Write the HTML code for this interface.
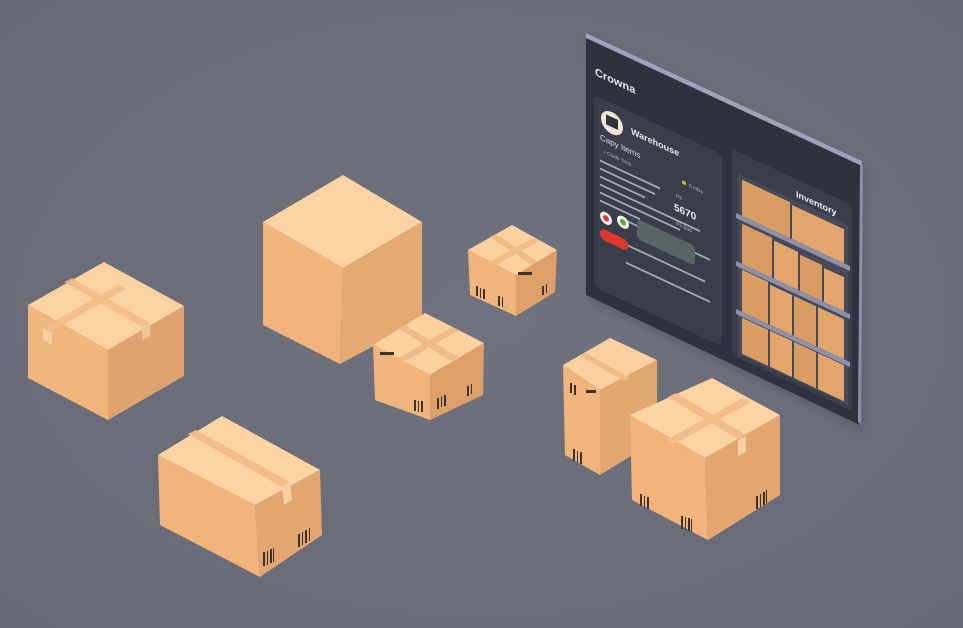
<!DOCTYPE html>
<html><head><meta charset="utf-8"><style>
html,body{margin:0;padding:0;background:#6b6e7a;width:963px;height:628px;overflow:hidden}
svg{display:block}
text{font-family:"Liberation Sans",sans-serif}
</style></head><body>
<svg width="963" height="628" viewBox="0 0 963 628" xmlns="http://www.w3.org/2000/svg">
<defs>
<radialGradient id="bg" cx="50%" cy="50%" r="70%"><stop offset="0" stop-color="#6f727d"/><stop offset="1" stop-color="#676a76"/></radialGradient>
<filter id="sh" x="-20%" y="-20%" width="140%" height="140%"><feGaussianBlur stdDeviation="4"/></filter>
</defs>
<rect width="963" height="628" fill="url(#bg)"/>

<!-- panel -->
<polygon points="590,40 864,168 862,430 590,302" fill="#50535f" opacity="0.5" filter="url(#sh)"/>
<polygon points="586,33 862,161 860,425 586,295" fill="#2e323d"/>
<polygon points="586,33 862,161 862,166 586,38" fill="#a39fbd"/>
<polygon points="860,163 863,166 861,425 858,422" fill="#8f8daa"/>
<g transform="translate(586,33) skewY(25)">
  <text x="9" y="38" font-size="11" fill="#e6e6ea" font-weight="bold">Crowna</text>
  <rect x="8" y="58" width="128" height="192" rx="6" fill="#3a3e4a"/>
  <circle cx="26" cy="78" r="11" fill="#f1e6d4"/>
  <rect x="20" y="72" width="12" height="10" fill="#2e323d"/>
  <text x="45" y="80" font-size="9" fill="#e8e8ec" font-weight="bold">Warehouse</text>
  <text x="14" y="100" font-size="8" fill="#e0e0e4">Capy Items</text>
  <text x="18" y="112" font-size="5" fill="#bcbcc4">• Clails Tims</text>
  <circle cx="98" cy="104" r="2" fill="#e6b030"/>
  <text x="103" y="106" font-size="5" fill="#bcbcc4">5 HDs</text>
  <text x="90" y="122" font-size="5" fill="#bcbcc4">Hs</text>
  <text x="88" y="136" font-size="10" fill="#eaeaee" font-weight="bold">5670</text>
  <text x="90" y="150" font-size="5" fill="#bcbcc4">P5 bad</text>
  <g fill="#a6a8b2">
    <rect x="14" y="120" width="60" height="2"/><rect x="14" y="128" width="55" height="2"/>
    <rect x="14" y="136" width="45" height="2"/><rect x="14" y="144" width="100" height="2"/>
    <rect x="14" y="152" width="80" height="2"/><rect x="14" y="160" width="40" height="2"/>
    <rect x="40" y="168" width="84" height="2"/><rect x="14" y="192" width="105" height="2"/>
    <rect x="40" y="210" width="84" height="2"/>
  </g>
  <circle cx="20" cy="176" r="6" fill="#f2f2f2"/><circle cx="20" cy="176" r="3" fill="#e03a34"/>
  <circle cx="37" cy="172" r="6" fill="#f2f2f2"/><circle cx="37" cy="172" r="3" fill="#5aa83e"/>
  <rect x="51" y="162" width="58" height="20" rx="4" fill="#5a6466"/>
  <rect x="14" y="188" width="28" height="11" rx="5" fill="#e2372e"/>
  <rect x="146" y="48" width="120" height="206" rx="4" fill="#3a3e4a"/>
  <text x="210" y="66" font-size="9" fill="#ececf0" font-weight="bold">Inventory</text>
  <g>
    <rect x="152" y="70" width="110" height="180" fill="#474b59"/>
    <rect x="156" y="74" width="48" height="36" fill="#d99d63"/>
    <rect x="206" y="76" width="52" height="34" fill="#e2a66c"/>
    <rect x="156" y="118" width="30" height="40" fill="#d99d63"/><rect x="188" y="120" width="24" height="38" fill="#e2a66c"/><rect x="214" y="122" width="22" height="36" fill="#d99d63"/><rect x="238" y="124" width="20" height="34" fill="#e2a66c"/>
    <rect x="156" y="164" width="26" height="42" fill="#d99d63"/><rect x="184" y="166" width="22" height="40" fill="#e2a66c"/><rect x="208" y="166" width="22" height="40" fill="#d99d63"/><rect x="232" y="166" width="26" height="40" fill="#e2a66c"/>
    <rect x="156" y="212" width="26" height="36" fill="#d99d63"/><rect x="184" y="212" width="22" height="36" fill="#e2a66c"/><rect x="208" y="212" width="22" height="36" fill="#d99d63"/><rect x="232" y="212" width="26" height="36" fill="#e2a66c"/>
    <g fill="#8d90a8"><rect x="150" y="110" width="114" height="5"/><rect x="150" y="158" width="114" height="5"/><rect x="150" y="206" width="114" height="5"/></g>
  </g>
</g>

<g>
<!-- box1 -->
<polygon points="104,262 184,306 108,350 28,305" fill="#fbd2a2"/>
<polygon points="28,305 108,350 108,420 28,378" fill="#f1b67d"/>
<polygon points="108,350 184,306 184,376 108,420" fill="#dea370"/>
<polygon points="64,282 72,278 150,323 142,327" fill="#f1bb86" opacity="0.8"/>
<polygon points="118,285 126,289 52,331 44,327" fill="#f1bb86" opacity="0.8"/>
<polygon points="43,328 52,333 52,345 43,340" fill="#f8cfa2"/>
<polygon points="142,328 150,324 150,336 142,340" fill="#f0c49a"/>
<!-- box2 -->
<polygon points="343,175 422,222 343,268 263,222" fill="#fcd3a3"/>
<polygon points="263,222 343,268 340,364 263,325" fill="#f1b47c"/>
<polygon points="343,268 422,222 422,320 340,364" fill="#e5a974"/>
<!-- box3 -->
<polygon points="512,225 557,250 516,275 468,250" fill="#fbd1a0"/>
<polygon points="468,250 516,275 516,316 470,295" fill="#f1b47c"/>
<polygon points="516,275 557,250 555,292 516,316" fill="#df9f68"/>
<polygon points="490,237 496,234 538,262 532,265" fill="#f0bb86"/>
<polygon points="533,238 539,241 494,266 488,263" fill="#f0bb86"/>
<g fill="#3a3330"><rect x="476" y="286" width="2" height="10"/><rect x="480" y="288" width="1" height="10"/><rect x="483" y="289" width="2" height="10"/><rect x="498" y="296" width="2" height="10"/><rect x="502" y="297" width="1" height="10"/><rect x="542" y="286" width="2" height="9"/><rect x="546" y="284" width="1" height="9"/><rect x="518" y="272" width="14" height="3"/></g>
<!-- box4 -->
<polygon points="425,313 484,343 430,375 373,345" fill="#fbd1a0"/>
<polygon points="373,345 430,375 430,420 375,400" fill="#f1b47c"/>
<polygon points="430,375 484,343 483,395 430,420" fill="#df9f68"/>
<polygon points="398,328 405,325 458,357 451,361" fill="#f0bb86"/>
<polygon points="452,327 459,330 406,361 399,358" fill="#f0bb86"/>
<g fill="#3a3330"><rect x="380" y="352" width="14" height="3"/><rect x="414" y="400" width="2" height="11"/><rect x="418" y="401" width="1" height="11"/><rect x="421" y="401" width="2" height="11"/><rect x="437" y="398" width="2" height="11"/><rect x="441" y="396" width="1" height="11"/><rect x="444" y="395" width="2" height="11"/><rect x="467" y="386" width="2" height="10"/><rect x="471" y="384" width="1" height="10"/></g>
<!-- box5 -->
<polygon points="222,416 320,470 255,505 158,455" fill="#fcd3a3"/>
<polygon points="158,455 255,505 260,577 160,525" fill="#f2b47c"/>
<polygon points="255,505 320,470 322,535 260,577" fill="#e3a670"/>
<polygon points="188,434 196,430 290,482 282,487" fill="#f2bd88"/>
<polygon points="282,487 290,482 292,500 284,505" fill="#f8cfa2"/>
<g fill="#3a3330"><rect x="263" y="552" width="2" height="14"/><rect x="267" y="551" width="1" height="14"/><rect x="270" y="549" width="2" height="14"/><rect x="273" y="548" width="1" height="14"/><rect x="298" y="534" width="2" height="13"/><rect x="302" y="532" width="1" height="13"/><rect x="305" y="530" width="2" height="13"/><rect x="309" y="528" width="1" height="13"/></g>
<!-- box6 -->
<polygon points="610,338 657,360 600,390 563,365" fill="#fbd0a0"/>
<polygon points="563,365 600,390 600,475 565,455" fill="#f1b47c"/>
<polygon points="600,390 657,360 657,440 600,475" fill="#e2a670"/>
<polygon points="580,356 586,353 630,378 624,381" fill="#f0bb86"/>
<g fill="#3a3330"><rect x="570" y="383" width="2" height="10"/><rect x="574" y="385" width="2" height="10"/><rect x="573" y="449" width="2" height="12"/><rect x="577" y="451" width="1" height="12"/><rect x="580" y="452" width="2" height="12"/><rect x="586" y="390" width="10" height="3"/></g>
<!-- box7 -->
<polygon points="712,378 780,415 705,458 630,415" fill="#fcd3a3"/>
<polygon points="630,415 705,458 708,540 632,500" fill="#f2b47c"/>
<polygon points="705,458 780,415 780,495 708,540" fill="#e3a670"/>
<polygon points="668,397 676,393 746,435 738,439" fill="#f2bd88"/>
<polygon points="743,398 751,402 674,444 666,440" fill="#f2bd88"/>
<polygon points="738,440 746,436 746,452 738,456" fill="#f8cfa2"/>
<g fill="#3a3330"><rect x="640" y="494" width="2" height="12"/><rect x="644" y="496" width="1" height="12"/><rect x="647" y="497" width="2" height="12"/><rect x="681" y="516" width="2" height="13"/><rect x="685" y="517" width="1" height="13"/><rect x="688" y="518" width="2" height="13"/><rect x="691" y="519" width="1" height="13"/><rect x="756" y="496" width="2" height="13"/><rect x="760" y="494" width="1" height="13"/><rect x="763" y="492" width="2" height="13"/><rect x="766" y="490" width="1" height="13"/></g>
</g>
</svg>
</body></html>
